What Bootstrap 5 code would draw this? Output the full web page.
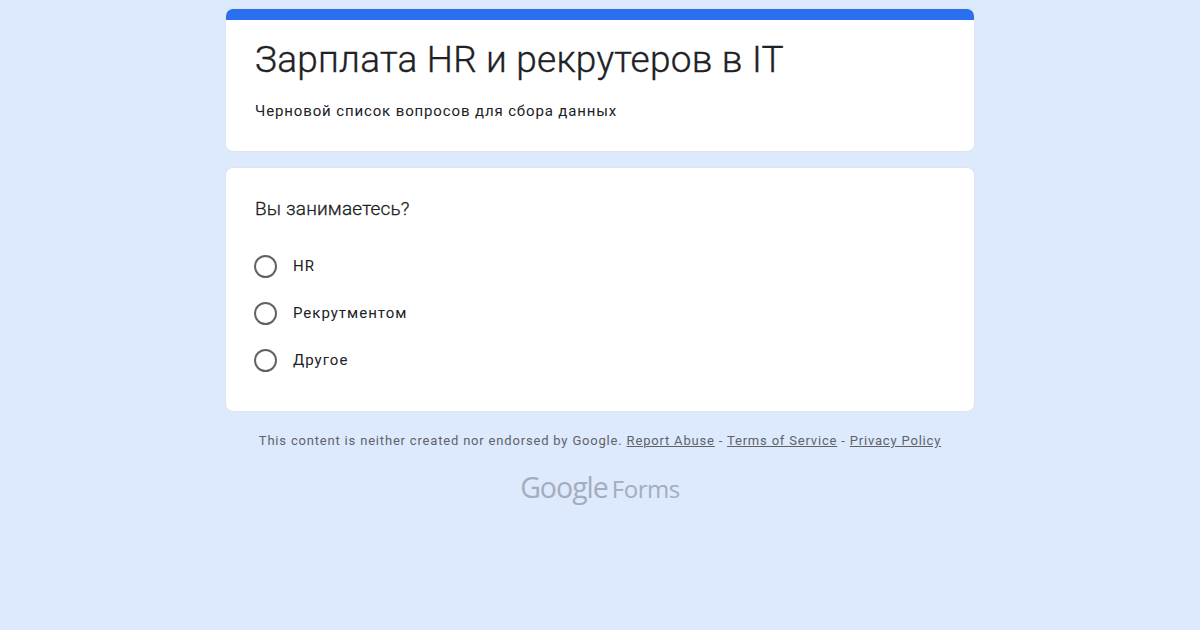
<!DOCTYPE html>
<html lang="ru">
<head>
<meta charset="utf-8">
<title>Зарплата HR и рекрутеров в IT</title>
<link href="https://cdn.jsdelivr.net/npm/bootstrap@5.3.0/dist/css/bootstrap.min.css" rel="stylesheet">
<style>
html,body{height:100%}
body{background:#dde9fd;font-family:Roboto,"Liberation Sans",sans-serif;color:#202124;overflow:hidden}
.form-wrap{width:750px;margin:0 auto;padding-top:8px}
.form-panel{background:#fff;border:1px solid #dfe3ea;border-radius:8px;overflow:hidden}
.head-panel{height:144px;margin-bottom:15px}
.head-bar{height:12px;background:#296ff0;margin:-1px -1px 0}
.form-name{font-size:37px;line-height:44px;font-weight:300;margin:18px 0 0 29px;color:#202124;letter-spacing:.22px;-webkit-text-stroke:.35px #202124}
.form-desc{font-size:15px;line-height:20px;margin:19px 0 0 29px;letter-spacing:.87px}
.ask-panel{height:245px;padding:28px 29px 0}
.ask-title{font-size:19px;line-height:26px;margin-bottom:21px;font-weight:300;letter-spacing:.16px;-webkit-text-stroke:.3px #202124}
.choice-row{height:47px;font-size:15px;letter-spacing:1px}
.choice-ring{width:23px;height:23px;border:2px solid #5f6368;border-radius:50%;margin-right:16px;margin-left:-1px;flex:none}
.legal-line{font-size:13px;line-height:18px;color:#5f6368;text-align:center;margin-top:20px;letter-spacing:.815px}
.legal-line a{color:#5f6368;text-decoration:underline}
.brand-line{color:#a3adbd;margin-top:19px;line-height:36px;height:36px}
.brand-g{font-family:"Open Sans",sans-serif;font-size:28.5px;letter-spacing:-1px;margin-right:-1px}
.brand-f{font-family:"Open Sans",sans-serif;font-size:24px;letter-spacing:-.45px;margin-left:5px}
</style>
</head>
<body>
<div class="form-wrap">
  <div class="form-panel head-panel">
    <div class="head-bar"></div>
    <h1 class="form-name">Зарплата HR и рекрутеров в IT</h1>
    <div class="form-desc">Черновой список вопросов для сбора данных</div>
  </div>
  <div class="form-panel ask-panel">
    <div class="ask-title">Вы занимаетесь?</div>
    <div class="d-flex align-items-center choice-row"><span class="choice-ring"></span>HR</div>
    <div class="d-flex align-items-center choice-row"><span class="choice-ring"></span>Рекрутментом</div>
    <div class="d-flex align-items-center choice-row"><span class="choice-ring"></span>Другое</div>
  </div>
  <div class="legal-line">This content is neither created nor endorsed by Google. <a href="#">Report Abuse</a> - <a href="#">Terms of Service</a> - <a href="#">Privacy Policy</a></div>
  <div class="brand-line d-flex justify-content-center align-items-baseline"><span class="brand-g">Google</span><span class="brand-f">Forms</span></div>
</div>
<script src="https://cdn.jsdelivr.net/npm/bootstrap@5.3.0/dist/js/bootstrap.bundle.min.js"></script>
</body>
</html>
